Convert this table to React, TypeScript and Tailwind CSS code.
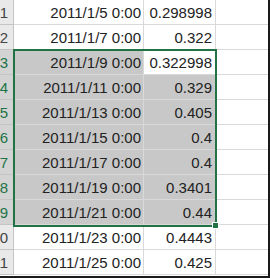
const rows = [
  { n: 1, date: "2011/1/5 0:00", val: "0.298998" },
  { n: 2, date: "2011/1/7 0:00", val: "0.322" },
  { n: 3, date: "2011/1/9 0:00", val: "0.322998" },
  { n: 4, date: "2011/1/11 0:00", val: "0.329" },
  { n: 5, date: "2011/1/13 0:00", val: "0.405" },
  { n: 6, date: "2011/1/15 0:00", val: "0.4" },
  { n: 7, date: "2011/1/17 0:00", val: "0.4" },
  { n: 8, date: "2011/1/19 0:00", val: "0.3401" },
  { n: 9, date: "2011/1/21 0:00", val: "0.44" },
  { n: 10, date: "2011/1/23 0:00", val: "0.4443" },
  { n: 11, date: "2011/1/25 0:00", val: "0.425" },
];

export default function App() {
  return (
    <div className="relative w-[270px] h-[278px] overflow-hidden bg-white border-r-2 border-b-2 border-[#1a1a1a] font-['Liberation_Sans',sans-serif] text-[15px] text-[#222]">
      {rows.map((r) => {
        const sel = r.n >= 3 && r.n <= 9;
        const active = r.n === 3;
        return (
          <div key={r.n} className="flex h-[25px]">
            {/* row header, scrolled so only the right part shows */}
            <div
              className={`w-[14px] shrink-0 overflow-hidden border-r border-b border-[#c4c4c4] flex justify-end items-center pr-[5px] leading-none ${
                sel ? "bg-[#d3d3d3] text-[#217346]" : "bg-[#e9e9e9] text-[#444]"
              }`}
            >
              <span className="whitespace-nowrap">{r.n}</span>
            </div>
            <div
              className={`w-[130px] shrink-0 border-r border-b border-[#d9d9d9] flex justify-end items-center pr-[2px] pt-[2px] ${
                sel ? "bg-[#c8c8c8]" : ""
              }`}
            >
              {r.date}
            </div>
            <div
              className={`w-[72px] shrink-0 border-r border-b border-[#d9d9d9] flex justify-end items-center pr-[3px] pt-[2px] ${
                sel && !active ? "bg-[#c8c8c8]" : ""
              }`}
            >
              {r.val}
            </div>
            <div className="w-[52px] shrink-0 border-b border-[#d9d9d9]" />
          </div>
        );
      })}
      {/* selection box */}
      <div className="absolute left-[13px] top-[49px] w-[204px] h-[178px] border-2 border-[#217346] pointer-events-none" />
      {/* fill handle */}
      <div className="absolute left-[212px] top-[222px] w-[7px] h-[7px] bg-[#217346] border border-white" />
    </div>
  );
}
